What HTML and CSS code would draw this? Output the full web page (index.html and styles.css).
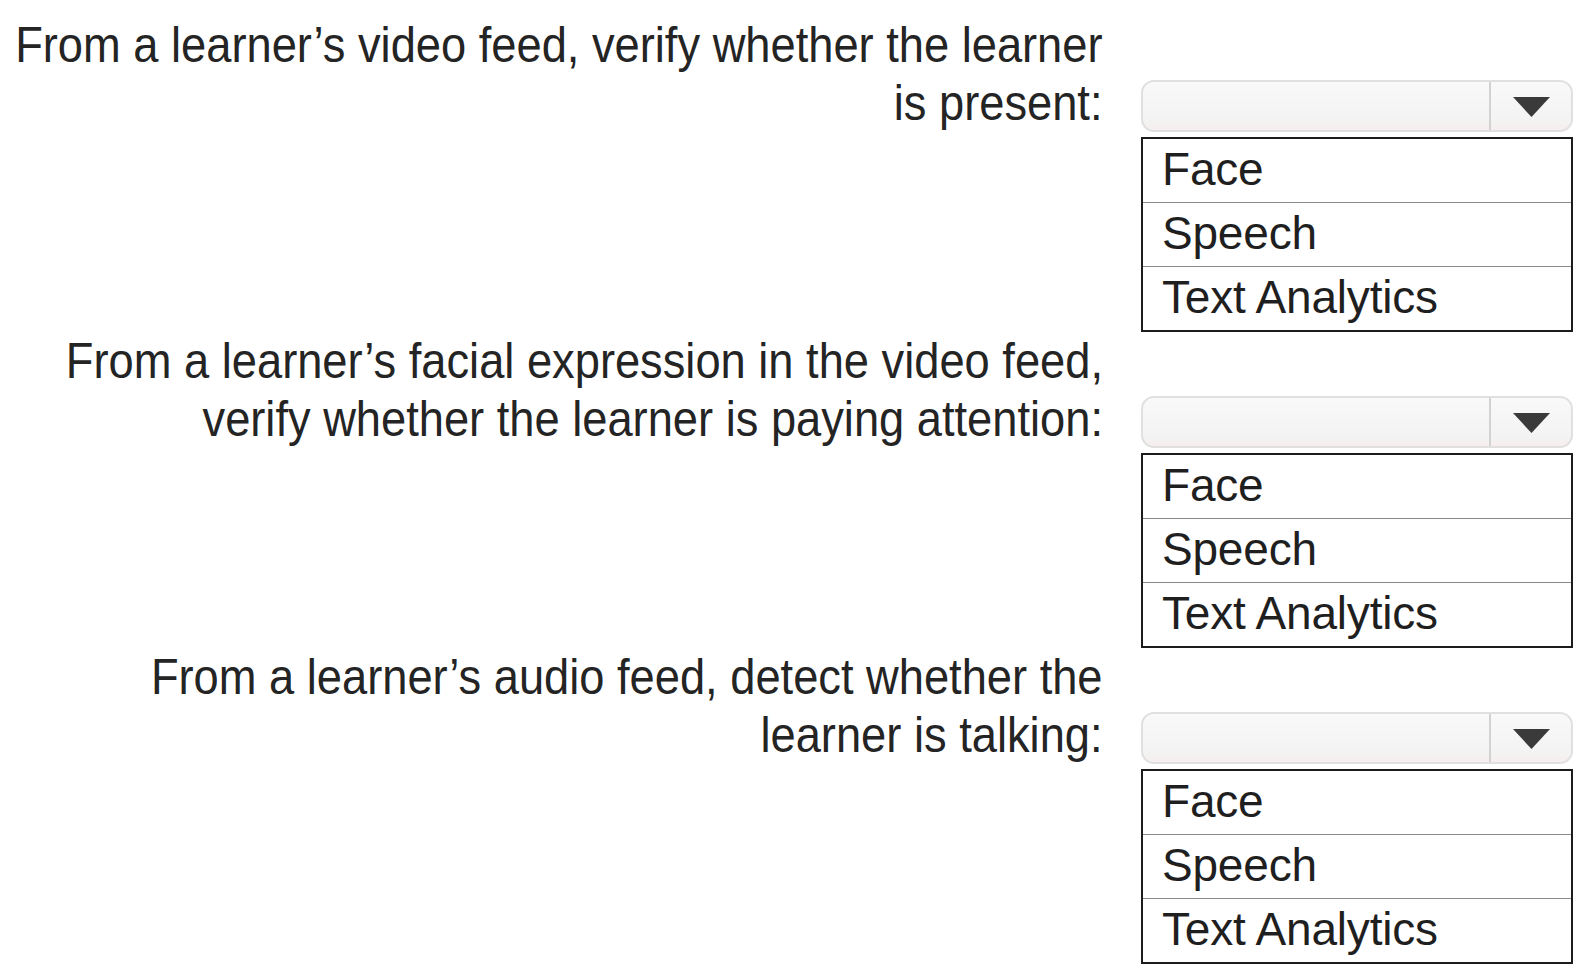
FILE: index.html
```html
<!DOCTYPE html>
<html lang="en">
<head>
<meta charset="utf-8">
<title>Match services</title>
<link rel="stylesheet" href="styles.css">
</head>
<body>
<div class="page">
  <section class="item">
    <div class="label-col">
      <div class="label-text">From a learner’s video feed, verify whether the learner<br>is present:</div>
    </div>
    <div class="control-col">
      <div class="select">
        <div class="select-value"></div>
        <div class="select-btn">
          <svg width="37" height="20" viewBox="0 0 37 20"><polygon points="0,0 37,0 18.5,20" fill="#3a3a3a"/></svg>
        </div>
      </div>
      <ul class="options">
        <li>Face</li>
        <li>Speech</li>
        <li>Text Analytics</li>
      </ul>
    </div>
  </section>
  <section class="item">
    <div class="label-col">
      <div class="label-text">From a learner’s facial expression in the video feed,<br>verify whether the learner is paying attention:</div>
    </div>
    <div class="control-col">
      <div class="select">
        <div class="select-value"></div>
        <div class="select-btn">
          <svg width="37" height="20" viewBox="0 0 37 20"><polygon points="0,0 37,0 18.5,20" fill="#3a3a3a"/></svg>
        </div>
      </div>
      <ul class="options">
        <li>Face</li>
        <li>Speech</li>
        <li>Text Analytics</li>
      </ul>
    </div>
  </section>
  <section class="item">
    <div class="label-col">
      <div class="label-text">From a learner’s audio feed, detect whether the<br>learner is talking:</div>
    </div>
    <div class="control-col">
      <div class="select">
        <div class="select-value"></div>
        <div class="select-btn">
          <svg width="37" height="20" viewBox="0 0 37 20"><polygon points="0,0 37,0 18.5,20" fill="#3a3a3a"/></svg>
        </div>
      </div>
      <ul class="options">
        <li>Face</li>
        <li>Speech</li>
        <li>Text Analytics</li>
      </ul>
    </div>
  </section>
</div>
</body>
</html>
```

FILE: styles.css
```css
html, body {
  margin: 0;
  padding: 0;
  background: #ffffff;
}

body {
  font-family: "Liberation Sans", Arial, sans-serif;
  color: #262626;
  overflow: hidden;
}

.page {
  width: 1584px;
  height: 976px;
  padding-top: 16px;
  box-sizing: border-box;
  display: flex;
  flex-direction: column;
}

.item {
  display: flex;
  align-items: flex-start;
  gap: 38px;
  height: 316px;
  flex: 0 0 auto;
}

.label-col {
  width: 1103px;
  flex: 0 0 1103px;
  display: flex;
  justify-content: flex-end;
}

.label-text {
  flex: 0 0 auto;
  white-space: nowrap;
  text-align: right;
  font-size: 50px;
  line-height: 58px;
  color: #242424;
  transform: scaleX(0.905);
  transform-origin: right top;
}

.control-col {
  width: 432px;
  flex: 0 0 432px;
  margin-top: 64px;
  display: flex;
  flex-direction: column;
  gap: 5px;
}

.select {
  height: 52px;
  box-sizing: border-box;
  border: 2px solid #e0e0e0;
  border-radius: 13px;
  background: linear-gradient(#f9f9f9, #f3f3f3 80%, #f7eeee);
  display: flex;
  overflow: hidden;
}

.select-value {
  flex: 1 1 auto;
}

.select-btn {
  width: 82px;
  flex: 0 0 82px;
  border-left: 2px solid #d2d2d2;
  display: flex;
  align-items: center;
  justify-content: center;
  padding-top: 2px;
  box-sizing: border-box;
}

.options {
  list-style: none;
  margin: 0;
  padding: 0;
  border: 2px solid #1c1c1c;
  background: #ffffff;
}

.options li {
  height: 64px;
  box-sizing: border-box;
  padding: 0 0 4px 19px;
  font-size: 46px;
  line-height: 60px;
  letter-spacing: -0.2px;
  color: #1f1f1f;
  border-top: 1px solid #8a8a8a;
}

.options li:first-child {
  border-top: none;
  height: 63px;
}
```
